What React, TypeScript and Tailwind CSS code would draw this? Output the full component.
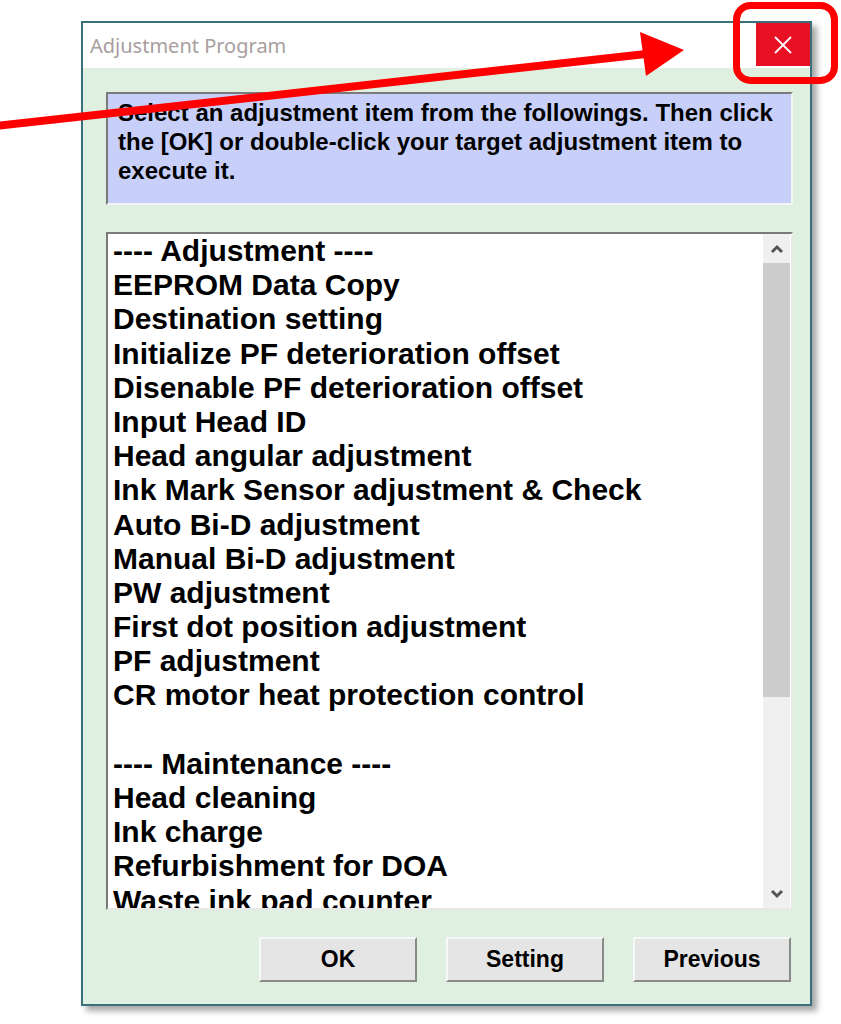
import React from "react"

const items = [
  "---- Adjustment ----",
  "EEPROM Data Copy",
  "Destination setting",
  "Initialize PF deterioration offset",
  "Disenable PF deterioration offset",
  "Input Head ID",
  "Head angular adjustment",
  "Ink Mark Sensor adjustment & Check",
  "Auto Bi-D adjustment",
  "Manual Bi-D adjustment",
  "PW adjustment",
  "First dot position adjustment",
  "PF adjustment",
  "CR motor heat protection control",
  "",
  "---- Maintenance ----",
  "Head cleaning",
  "Ink charge",
  "Refurbishment for DOA",
  "Waste ink pad counter",
]

const WinButton = ({ label }: { label: string }) => (
  <button
    className="w-[158px] h-[45px] bg-[#e5e5e5] border-2 border-t-[#f8f8f8] border-l-[#f8f8f8] border-r-[#8a8a8a] border-b-[#8a8a8a]
      text-[23px] font-bold text-black"
  >
    {label}
  </button>
)

const App = () => {
  return (
    <div
      className="relative w-[841px] h-[1024px] bg-white overflow-hidden"
      style={{ fontFamily: '"Liberation Sans", Arial, sans-serif' }}
    >
      {/* dialog window */}
      <div className="ml-[81px] mt-[21px] w-[731px] h-[985px] flex flex-col border-2 border-[#3a6f7e] bg-[#e0f0e0] shadow-[5px_5px_6px_rgba(0,0,0,0.35)]">
        <div className="h-[45px] shrink-0 flex items-start bg-white">
          <span
            className="pl-[7px] pt-[8px] text-[20px] text-[#a89e9e] flex-1"
            style={{ fontFamily: '"Noto Sans", "Open Sans", sans-serif' }}
          >
            Adjustment Program
          </span>
          <div className="w-[54px] h-[43px] bg-[#e81123] flex items-center justify-center">
            <svg width="18" height="18" viewBox="0 0 18 18">
              <path d="M1 1 L17 17 M17 1 L1 17" stroke="#fff" strokeWidth="1.8" fill="none" />
            </svg>
          </div>
        </div>

        <div className="flex flex-col pt-[24px] pl-[23px]">
          <div className="w-[687px] h-[113px] bg-[#c8d0fa] border-2 border-t-[#7a7a7a] border-l-[#7a7a7a] border-r-[#f4f4f4] border-b-[#f4f4f4] pl-[10px] pt-[4px] pr-[6px]">
            <p className="text-[24px] leading-[29px] font-bold text-black">
              Select an adjustment item from the followings. Then click the [OK] or double-click your target adjustment item to execute it.
            </p>
          </div>

          <div className="mt-[27px] w-[687px] h-[678px] flex bg-white border-2 border-t-[#7a7a7a] border-l-[#7a7a7a] border-r-[#e8e8e8] border-b-[#e8e8e8] overflow-hidden">
            <ul className="flex-1 pl-[5px] overflow-hidden">
              {items.map((item, i) => (
                <li key={i} className="h-[34.2px] leading-[34.2px] text-[30px] font-bold text-black whitespace-nowrap">
                  {item}
                </li>
              ))}
            </ul>
            <div className="w-[27px] mr-[1px] flex flex-col bg-[#f0f0f0]">
              <div className="h-[29px] flex items-center justify-center">
                <svg width="14" height="10" viewBox="0 0 14 10">
                  <path d="M2 8 L7 3 L12 8" stroke="#555" strokeWidth="3" fill="none" />
                </svg>
              </div>
              <div className="h-[434px] bg-[#cdcdcd]"></div>
              <div className="flex-1"></div>
              <div className="h-[29px] flex items-center justify-center">
                <svg width="14" height="10" viewBox="0 0 14 10">
                  <path d="M2 2 L7 7 L12 2" stroke="#555" strokeWidth="3" fill="none" />
                </svg>
              </div>
            </div>
          </div>

          <div className="mt-[27px] w-[685px] flex justify-end gap-[29px]">
            <WinButton label="OK" />
            <WinButton label="Setting" />
            <WinButton label="Previous" />
          </div>
        </div>
      </div>

      {/* red annotation overlay */}
      <svg className="absolute inset-0 pointer-events-none" width="841" height="1024" viewBox="0 0 841 1024">
        <line x1="-4" y1="126" x2="646" y2="54" stroke="#ff0000" strokeWidth="8" />
        <polygon points="640,32 684,50 646,76" fill="#ff0000" />
        <rect x="736.5" y="5.5" width="98" height="75" rx="14" fill="none" stroke="#ff0000" strokeWidth="7" />
      </svg>
    </div>
  )
}

export default App
